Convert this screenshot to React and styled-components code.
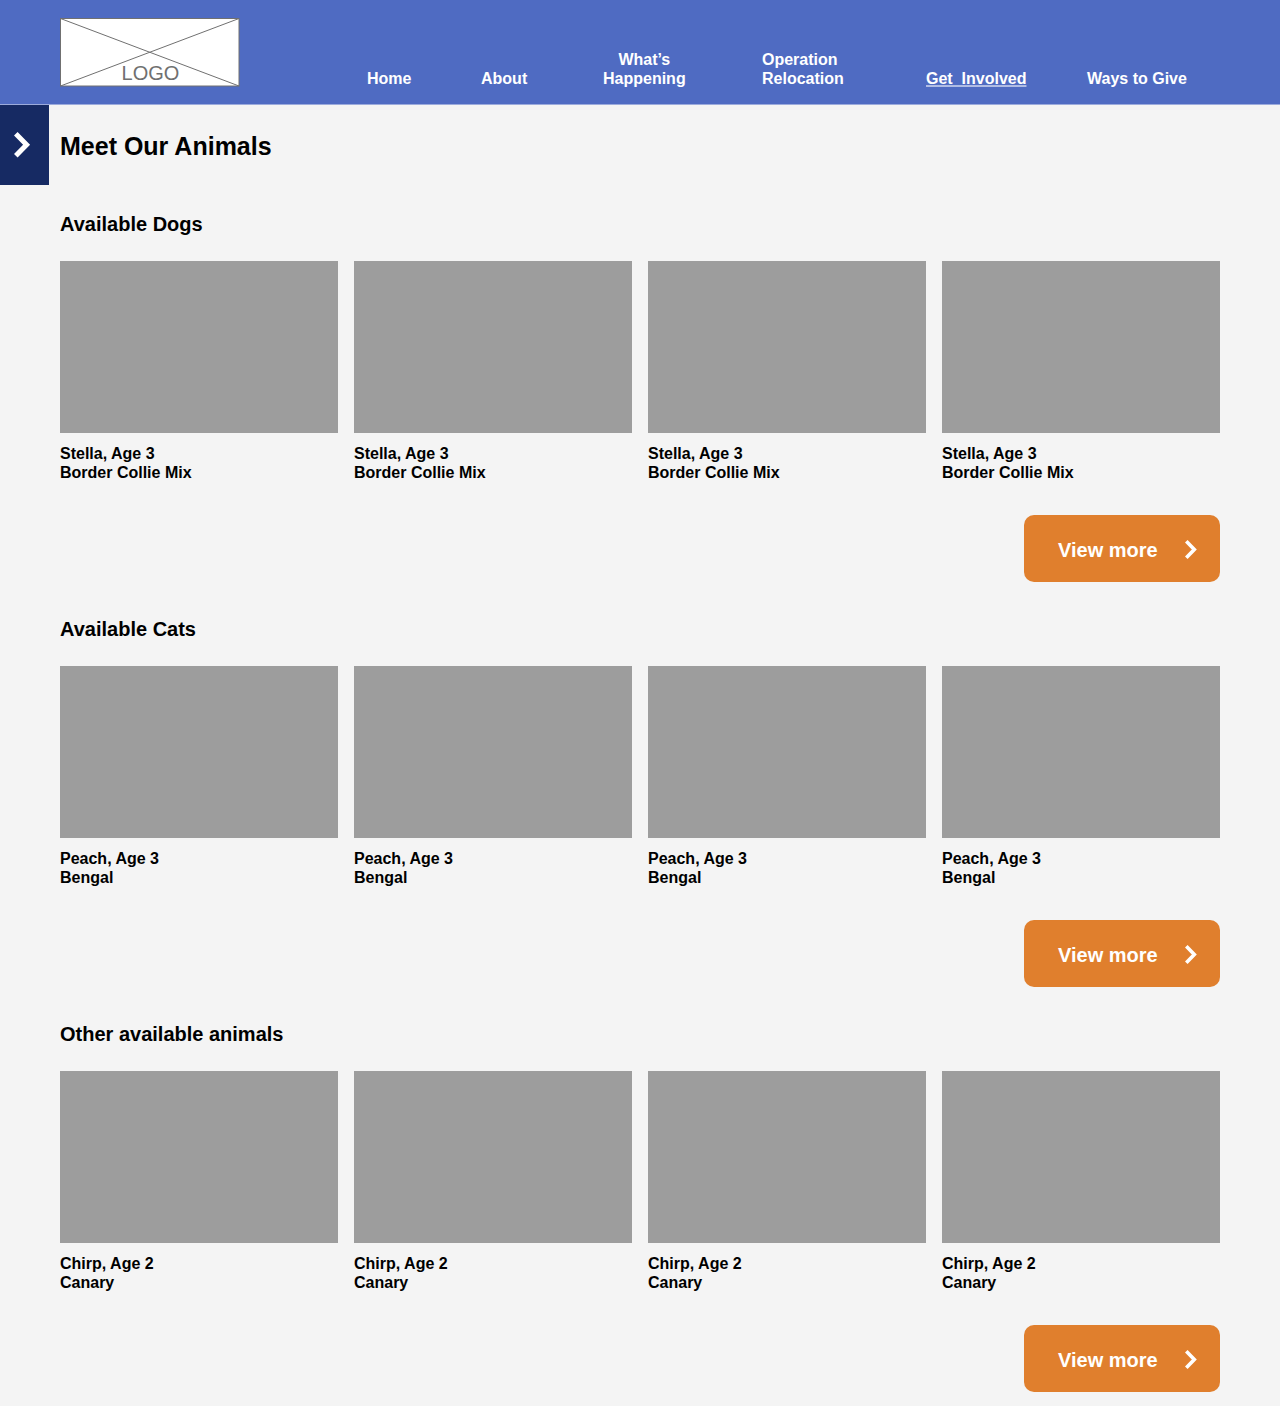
import React from "react";
import styled, { createGlobalStyle } from "styled-components";

const GlobalStyle = createGlobalStyle`
  *, *::before, *::after { box-sizing: border-box; }
  body {
    margin: 0;
    background: #f4f4f4;
    color: #000;
    font-family: "Liberation Sans", Arial, Helvetica, sans-serif;
    font-size: 16px;
    line-height: 19px;
  }
`;

const Header = styled.header`
  display: flex;
  align-items: flex-end;
  gap: 127px;
  min-height: 105px;
  padding: 18px 60px 16px;
  background: #4f6bc2;
  border-bottom: 1px solid #9cabdc;
`;

const LogoLink = styled.a`
  flex: none;
  align-self: flex-start;
  line-height: 0;
`;

const LogoDrawing = styled.svg`
  width: 180px;
  height: 69px;
`;

const LogoText = styled.text`
  font-family: "Liberation Sans", Arial, sans-serif;
  font-size: 20px;
  fill: #707070;
`;

const Nav = styled.nav`
  flex: 1;
  display: grid;
  grid-template-columns: 114fr 122fr 159fr 164fr 161fr 133fr;
  align-items: end;
  justify-items: start;
`;

const NavLink = styled.a`
  color: #fff;
  font-weight: 700;
  white-space: pre;
  text-align: ${(p) => p.$align || "left"};
  text-decoration: ${(p) => (p.$current ? "underline" : "none")};
  text-decoration-color: #b0bce4;
  text-decoration-thickness: 2px;
`;

const TitleRow = styled.div`
  display: flex;
  align-items: center;
  gap: 11px;
`;

const MenuTab = styled.button`
  display: flex;
  align-items: center;
  justify-content: flex-start;
  width: 49px;
  height: 80px;
  padding: 0 14px;
  border: 0;
  background: #162a63;
  color: #fff;
  cursor: pointer;
`;

const Chevron = styled.svg`
  flex: none;
  width: ${(p) => p.$width}px;
  height: ${(p) => p.$height}px;
  fill: none;
  stroke: currentColor;
`;

const PageTitle = styled.h1`
  margin: 0;
  padding-top: 2px;
  font-size: 25px;
  line-height: 30px;
`;

const Sections = styled.div`
  display: grid;
  gap: 35px;
  padding: 27px 60px 14px;
`;

const SectionTitle = styled.h2`
  margin: 0 0 25px;
  font-size: 20px;
  line-height: 24px;
`;

const AnimalGrid = styled.ul`
  display: grid;
  grid-template-columns: repeat(4, 1fr);
  gap: 16px;
  margin: 0 0 33px;
  padding: 0;
  list-style: none;
`;

const Photo = styled.div`
  height: 172px;
  margin-bottom: 11px;
  background: #9d9d9d;
`;

const Caption = styled.p`
  margin: 0;
  font-weight: 700;
`;

const ViewMore = styled.button`
  display: flex;
  align-items: center;
  justify-content: space-between;
  width: 196px;
  height: 67px;
  margin-left: auto;
  padding: 2px 23px 0 34px;
  border: 0;
  border-radius: 10px;
  background: #e07f2d;
  color: #fff;
  font-family: inherit;
  font-size: 20px;
  font-weight: 700;
  line-height: 24px;
  cursor: pointer;
`;

const navItems = [
  { label: "Home" },
  { label: "About" },
  { label: "What’s\nHappening", align: "center" },
  { label: "Operation\nRelocation" },
  { label: "Get  Involved", current: true },
  { label: "Ways to Give" },
];

const groups = [
  { title: "Available Dogs", name: "Stella, Age 3", breed: "Border Collie Mix" },
  { title: "Available Cats", name: "Peach, Age 3", breed: "Bengal" },
  { title: "Other available animals", name: "Chirp, Age 2", breed: "Canary" },
];

function Logo() {
  return (
    <LogoLink href="#home" aria-label="Logo">
      <LogoDrawing viewBox="0 0 180 69">
        <rect x="0.5" y="0.5" width="178.5" height="67.5" fill="#fff" stroke="#707070" />
        <path d="M0.5 0.5 179 68M179 0.5 0.5 68" stroke="#707070" />
        <LogoText x="90.5" y="62" textAnchor="middle">LOGO</LogoText>
      </LogoDrawing>
    </LogoLink>
  );
}

function AnimalSection({ title, name, breed }) {
  return (
    <section>
      <SectionTitle>{title}</SectionTitle>
      <AnimalGrid>
        {[1, 2, 3, 4].map((n) => (
          <li key={n}>
            <Photo />
            <Caption>{name}</Caption>
            <Caption>{breed}</Caption>
          </li>
        ))}
      </AnimalGrid>
      <ViewMore type="button">
        View more
        <Chevron $width={12} $height={20} viewBox="0 0 12 20" strokeWidth="3.6" aria-hidden="true">
          <path d="M1.3 1.3 9.3 9.5 1.3 17.7" />
        </Chevron>
      </ViewMore>
    </section>
  );
}

export default function App() {
  return (
    <>
      <GlobalStyle />
      <Header>
        <Logo />
        <Nav>
          {navItems.map((item) => (
            <NavLink
              key={item.label}
              href="#"
              $align={item.align}
              $current={item.current}
              aria-current={item.current ? "page" : undefined}
            >
              {item.label}
            </NavLink>
          ))}
        </Nav>
      </Header>
      <main>
        <TitleRow>
          <MenuTab type="button" aria-label="Open menu">
            <Chevron $width={17} $height={26} viewBox="0 0 17 26" strokeWidth="5" aria-hidden="true">
              <path d="M1.8 1.8 12.6 12.7 1.8 23.8" />
            </Chevron>
          </MenuTab>
          <PageTitle>Meet Our Animals</PageTitle>
        </TitleRow>
        <Sections>
          {groups.map((group) => (
            <AnimalSection key={group.title} {...group} />
          ))}
        </Sections>
      </main>
    </>
  );
}
